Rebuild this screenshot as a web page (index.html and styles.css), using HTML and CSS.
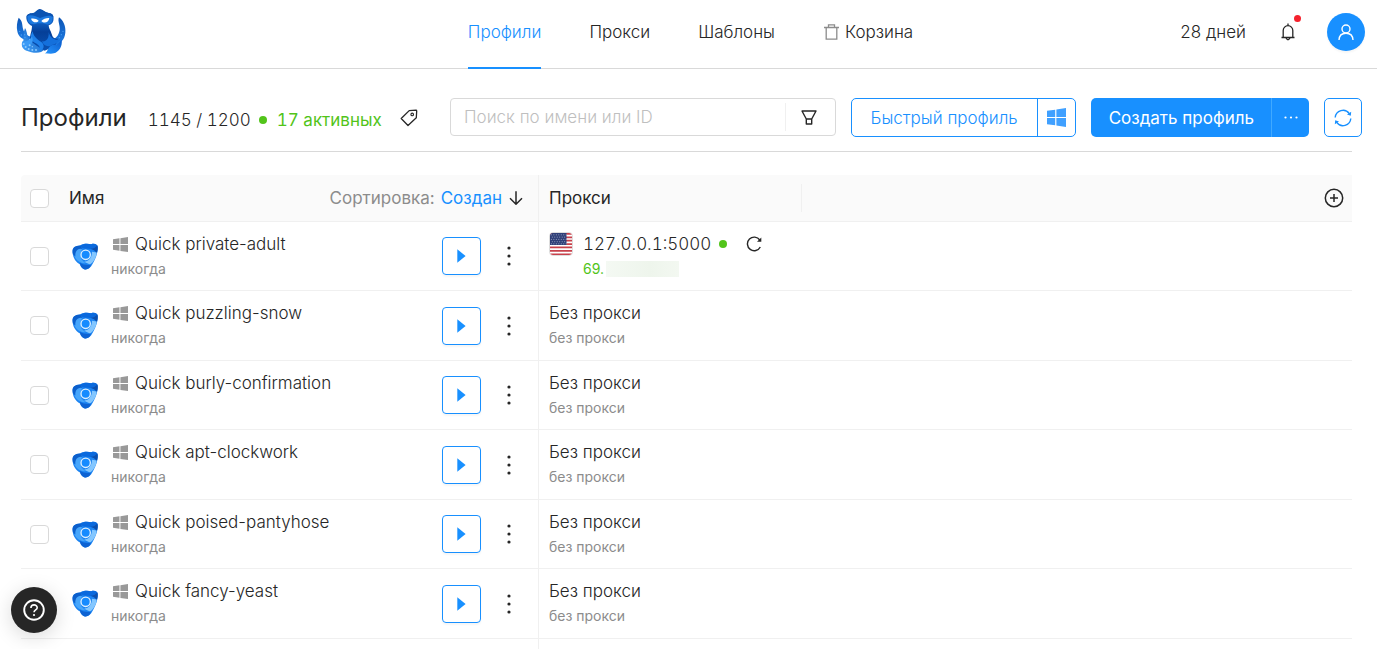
FILE: index.html
```html
<!DOCTYPE html>
<html lang="ru">
<head>
<meta charset="utf-8">
<meta name="viewport" content="width=device-width, initial-scale=1">
<title>Профили</title>
<link rel="stylesheet" href="styles.css">
</head>
<body>
<svg class="sprite" aria-hidden="true">
  <defs>
    <linearGradient id="g-head" x1="0" y1="0" x2="0" y2="1"><stop offset="0" stop-color="#0b4ea8"/><stop offset=".3" stop-color="#1060c4"/><stop offset=".55" stop-color="#053f98"/><stop offset="1" stop-color="#0a52b4"/></linearGradient>
    <linearGradient id="g-arm" x1="0" y1="0" x2="0" y2="1"><stop offset="0" stop-color="#0c54b4"/><stop offset="1" stop-color="#1f7ee6"/></linearGradient>
    <linearGradient id="g-left" x1="1" y1="0" x2="0" y2="1"><stop offset="0" stop-color="#0a55b8"/><stop offset="1" stop-color="#45a4fb"/></linearGradient>
    <linearGradient id="g-paddle" x1="1" y1="0" x2="0" y2="1"><stop offset="0" stop-color="#0a5ccc"/><stop offset="1" stop-color="#2796ff"/></linearGradient>
    <symbol id="win" viewBox="0 0 16 16"><path d="M0 2.400 6.900 1.400V7.500H0zM7.900 1.200 16 0V7.500H7.900zM0 8.500H6.900V14.600L0 13.600zM7.900 8.500H16V16L7.900 14.800z"/></symbol>
    <symbol id="play" viewBox="0 0 9 14"><path d="M0.300 0.300 8.600 7 0.300 13.700z"/></symbol>
    <symbol id="dots" viewBox="0 0 4 20"><circle cx="2" cy="2" r="1.600"/><circle cx="2" cy="10" r="1.600"/><circle cx="2" cy="18" r="1.600"/></symbol>
    <symbol id="browser" viewBox="0 0 78 80">
      <path d="M2 28C0 14 8 8 24 7 32 0 48 1 58 3 68 0 78 4 77 14 78 30 70 48 62 62 56 74 48 80 39 79 30 77 26 70 24 64 10 56 2 42 2 28z" fill="#1c84f2"/>
      <path d="M6 30C8 18 18 14 30 17L26 30 28 48 40 60C22 62 6 46 6 30z" fill="#45a5fb"/>
      <path d="M2 30C0 14 8 8 25 7L31 17C18 16 9 22 10 40 6 37 3 34 2 30z" fill="#0b5fcc"/>
      <path d="M25 8C34 0 48 1 58 3 68 0 78 4 77 14L75 28C66 18 52 15 42 17 34 17 28 14 25 8z" fill="#0a69dd"/>
      <path d="M56 17C66 16 72 12 76 6 78 14 77 22 74 30 70 23 64 19 56 17z" fill="#0c4fad"/>
      <path d="M60 26 74 28C73 42 66 56 54 64L36 56C52 54 60 42 60 26z" fill="#84c7ff"/>
      <path d="M24 58C32 65 44 66 57 65 54 76 45 81 36 78 28 75 24 67 24 58z" fill="#0d62d2"/>
      <circle cx="41" cy="35" r="14" fill="#168bff" stroke="#dff0ff" stroke-width="4"/>
    </symbol>
  </defs>
</svg>

<header class="topbar">
  <a class="logo" href="#" aria-label="Главная">
    <svg viewBox="6 6 150 144" width="50" height="48">
      <path d="M14 35C9 48 7 62 10 76 13 92 24 100 42 104L54 92C40 90 31 82 27 68 24 55 26 44 14 35z" fill="url(#g-arm)"/>
      <path d="M135 34C148 42 156 62 154 80 152 102 138 116 116 118L104 100C124 102 134 90 137 72 139 58 130 46 135 34z" fill="url(#g-arm)"/>
      <path d="M33 66C27 80 30 92 28 104 20 114 24 128 38 134 56 142 82 144 92 130L90 106 66 84 48 104C38 98 42 80 33 66z" fill="url(#g-left)"/>
      <path d="M77 9C88 11 93 19 104 21 116 21 121 32 118 44 116 52 110 56 104 58 104 68 110 74 113 84 116 96 124 100 132 98L124 120 92 134 66 118 48 104C46 90 54 76 54 60 42 54 36 42 37 32 40 21 52 22 60 20 66 17 68 11 77 9z" fill="url(#g-head)"/>
      <path d="M40 30C54 20 68 30 78 34 90 30 104 18 117 30L114 46C112 56 98 58 88 52H70C58 58 46 54 42 44z" fill="#1c78df"/>
      <path d="M37 32C42 20 54 23 62 21 70 17 72 11 77 10 86 12 92 20 104 21 114 22 119 28 118 34 108 24 92 31 78 36 62 29 48 23 37 32z" fill="#0b53b2"/>
      <path d="M51 38C58 36 68 38 74 44 70 51 56 52 51 38zM82 45C88 38 98 35 106 36 104 50 90 54 82 45z" fill="#fff"/>
      <path d="M56 76C46 92 50 104 62 110 76 116 82 126 74 136 90 132 94 118 82 108 68 100 58 90 56 76z" fill="#1e80ea"/>
      <path d="M54 92C44 104 36 108 26 106 20 116 24 128 38 134 28 122 44 124 54 112 58 104 56 98 54 92z" fill="#3a9af6"/>
      <path d="M104 78C106 98 96 108 84 106 90 122 104 124 116 116 128 114 138 104 140 98 134 104 110 104 104 78z" fill="#1470dc"/>
      <path d="M92 142C104 138 100 116 122 116 132 114 138 108 143 102 146 122 134 138 120 142 110 145 102 142 92 142z" fill="url(#g-paddle)"/>
      <g fill="#8ccbff"><circle cx="29" cy="114" r="3"/><circle cx="35" cy="123" r="3"/><circle cx="44" cy="129" r="3"/><circle cx="55" cy="132" r="3"/><circle cx="66" cy="132" r="3"/><circle cx="47" cy="118" r="3"/><circle cx="55" cy="122" r="2"/></g>
      <g fill="#4aa2f6"><circle cx="32" cy="86" r="2"/><circle cx="33" cy="94" r="2"/><circle cx="17" cy="76" r="2"/><circle cx="22" cy="87" r="2"/><circle cx="142" cy="86" r="2"/><circle cx="147" cy="76" r="2"/><circle cx="136" cy="95" r="2"/></g>
    </svg>
  </a>
  <nav class="nav">
    <a class="nav-item active" href="#">Профили</a>
    <a class="nav-item" href="#">Прокси</a>
    <a class="nav-item" href="#">Шаблоны</a>
    <a class="nav-item" href="#"><svg class="trash" viewBox="0 0 15 16" width="15" height="16"><path d="M0 3.500H15M4.500 3.200V.8H10.500V3.200M2.200 3.500V15.200H12.800V3.500" fill="none" stroke="#8c8c8c" stroke-width="1.300"/></svg>Корзина</a>
  </nav>
  <div class="account">
    <span class="days">28 дней</span>
    <button class="bell" aria-label="Уведомления">
      <svg viewBox="0 0 14 18" width="14" height="18"><path d="M.5 14.500H13.500M2.200 14.300V7.500A4.800 4.800 0 0 1 11.800 7.500V14.300M7 2.700V.5M5 15Q7 18.500 9 15" fill="none" stroke="#262626" stroke-width="1.300"/></svg>
      <span class="badge"></span>
    </button>
    <button class="avatar" aria-label="Профиль"><svg viewBox="0 0 16 17" width="16" height="17"><circle cx="8" cy="5" r="4" fill="none" stroke="#fff" stroke-width="1.400"/><path d="M1 16C1.200 11.500 4 9.200 8 9.200S14.800 11.500 15 16" fill="none" stroke="#fff" stroke-width="1.400"/></svg></button>
  </div>
</header>

<main class="page">
  <div class="toolbar">
    <div class="summary">
      <h1 class="title">Профили</h1>
      <span class="count">1145 / 1200</span>
      <span class="dot"></span>
      <span class="active-count">17 активных</span>
      <button class="tag" aria-label="Теги"><svg viewBox="0 0 18 18" width="18" height="18"><path d="M1.200 9.500 9.200 1.600 16 1.200Q16.700 1.200 16.700 2L16.300 8.800 8 16.500z" fill="none" stroke="#262626" stroke-width="1.300" stroke-linejoin="round"/><circle cx="12.200" cy="5.400" r="1.300" fill="none" stroke="#262626" stroke-width="1.100"/></svg></button>
    </div>
    <div class="search">
      <input class="search-input" type="text" placeholder="Поиск по имени или ID" aria-label="Поиск по имени или ID">
      <button class="filter" aria-label="Фильтр"><svg viewBox="0 0 16 15" width="16" height="15"><path d="M1 1H15L10.700 9V14H5.300V9zM5.300 9H10.700" fill="none" stroke="#262626" stroke-width="1.400" stroke-linejoin="round"/></svg></button>
    </div>
    <div class="group outline">
      <button class="group-main">Быстрый профиль</button><button class="group-side" aria-label="Windows"><svg class="win-blue" width="19" height="19"><use href="#win"/></svg></button>
    </div>
    <div class="group solid">
      <button class="group-main">Создать профиль</button><button class="group-side" aria-label="Ещё"><svg viewBox="0 0 14 3" width="14" height="3" fill="#fff"><circle cx="1.500" cy="1.500" r="1.100"/><circle cx="7" cy="1.500" r="1.100"/><circle cx="12.500" cy="1.500" r="1.100"/></svg></button>
    </div>
    <button class="refresh" aria-label="Обновить"><svg viewBox="0 0 18 18" width="18" height="18"><path d="M1.200 8.500A7.800 7.800 0 0 1 15.300 4.600M16.800 9.500A7.800 7.800 0 0 1 2.700 13.400" fill="none" stroke="#1890ff" stroke-width="1.400"/><path d="M17.200 2.800 16.800 6.800 13 5.500zM.8 15.200 1.200 11.200 5 12.500z" fill="#1890ff"/></svg></button>
  </div>
  <hr class="rule">

  <table class="table">
    <colgroup><col class="col-name"><col class="col-proxy"><col></colgroup>
    <thead>
      <tr>
        <th class="name-cell"><div class="head-name"><input class="check" type="checkbox" aria-label="Выбрать все"><span class="head-label">Имя</span><span class="sort-label">Сортировка:</span><button class="sort">Создан<svg viewBox="0 0 14 14" width="14" height="14"><path d="M7 .3V13M1 7.200 7 13.200 13 7.200" fill="none" stroke="#262626" stroke-width="1.500"/></svg></button></div></th>
        <th class="proxy-cell"><div class="head-proxy">Прокси</div></th>
        <th class="add-cell"><button class="add" aria-label="Добавить колонку"><svg viewBox="0 0 20 20" width="20" height="20"><circle cx="10" cy="10" r="8.700"/><path d="M10 6V14M6 10H14"/></svg></button></th>
      </tr>
    </thead>
    <tbody>
      <tr>
        <td class="name-cell"><div class="row"><input class="check" type="checkbox" aria-label="Quick private-adult"><svg class="browser" width="26" height="27"><use href="#browser"/></svg><div class="info"><div class="name"><svg class="win" width="15" height="15"><use href="#win"/></svg>Quick private-adult</div><div class="sub">никогда</div></div><button class="run" aria-label="Запустить"><svg width="9" height="14"><use href="#play"/></svg></button><button class="more" aria-label="Меню"><svg width="4" height="20"><use href="#dots"/></svg></button></div></td>
        <td class="proxy-cell" colspan="2"><div class="proxy">
          <svg class="flag" viewBox="0 0 24 24" width="24" height="24" role="img" aria-label="США"><path fill="#fff" d="M0 0H24V24H0z"/><path d="M0 1H24M0 4.700H24M0 8.400H24M0 12.100H24M0 15.800H24M0 19.500H24M0 23.200H24" stroke="#c8414b" stroke-width="1.900"/><path fill="#2f3f78" d="M0 0H18V13H0z"/><path d="M1 2H18M2 4.500H18M1 7H18M2 9.500H18M1 11.800H18" stroke="#c3c9dc" stroke-width=".8" stroke-dasharray="1 1.700"/></svg>
          <div class="info"><div class="name ip">127.0.0.1:5000<span class="dot"></span><button class="recheck" aria-label="Проверить"><svg viewBox="0 0 16 16" width="16" height="16"><path d="M13.800 4A6.800 6.800 0 1 0 14.300 11" fill="none" stroke="#262626" stroke-width="1.400"/><path d="M15.300 1.500V5.700H11z" fill="#262626"/></svg></button></div><div class="sub green">69.<span class="mask"></span></div></div>
        </div></td>
      </tr>
      <tr>
        <td class="name-cell"><div class="row"><input class="check" type="checkbox" aria-label="Quick puzzling-snow"><svg class="browser" width="26" height="27"><use href="#browser"/></svg><div class="info"><div class="name"><svg class="win" width="15" height="15"><use href="#win"/></svg>Quick puzzling-snow</div><div class="sub">никогда</div></div><button class="run" aria-label="Запустить"><svg width="9" height="14"><use href="#play"/></svg></button><button class="more" aria-label="Меню"><svg width="4" height="20"><use href="#dots"/></svg></button></div></td>
        <td class="proxy-cell" colspan="2"><div class="proxy"><div class="info"><div class="name">Без прокси</div><div class="sub">без прокси</div></div></div></td>
      </tr>
      <tr>
        <td class="name-cell"><div class="row"><input class="check" type="checkbox" aria-label="Quick burly-confirmation"><svg class="browser" width="26" height="27"><use href="#browser"/></svg><div class="info"><div class="name"><svg class="win" width="15" height="15"><use href="#win"/></svg>Quick burly-confirmation</div><div class="sub">никогда</div></div><button class="run" aria-label="Запустить"><svg width="9" height="14"><use href="#play"/></svg></button><button class="more" aria-label="Меню"><svg width="4" height="20"><use href="#dots"/></svg></button></div></td>
        <td class="proxy-cell" colspan="2"><div class="proxy"><div class="info"><div class="name">Без прокси</div><div class="sub">без прокси</div></div></div></td>
      </tr>
      <tr>
        <td class="name-cell"><div class="row"><input class="check" type="checkbox" aria-label="Quick apt-clockwork"><svg class="browser" width="26" height="27"><use href="#browser"/></svg><div class="info"><div class="name"><svg class="win" width="15" height="15"><use href="#win"/></svg>Quick apt-clockwork</div><div class="sub">никогда</div></div><button class="run" aria-label="Запустить"><svg width="9" height="14"><use href="#play"/></svg></button><button class="more" aria-label="Меню"><svg width="4" height="20"><use href="#dots"/></svg></button></div></td>
        <td class="proxy-cell" colspan="2"><div class="proxy"><div class="info"><div class="name">Без прокси</div><div class="sub">без прокси</div></div></div></td>
      </tr>
      <tr>
        <td class="name-cell"><div class="row"><input class="check" type="checkbox" aria-label="Quick poised-pantyhose"><svg class="browser" width="26" height="27"><use href="#browser"/></svg><div class="info"><div class="name"><svg class="win" width="15" height="15"><use href="#win"/></svg>Quick poised-pantyhose</div><div class="sub">никогда</div></div><button class="run" aria-label="Запустить"><svg width="9" height="14"><use href="#play"/></svg></button><button class="more" aria-label="Меню"><svg width="4" height="20"><use href="#dots"/></svg></button></div></td>
        <td class="proxy-cell" colspan="2"><div class="proxy"><div class="info"><div class="name">Без прокси</div><div class="sub">без прокси</div></div></div></td>
      </tr>
      <tr>
        <td class="name-cell"><div class="row"><input class="check" type="checkbox" aria-label="Quick fancy-yeast"><svg class="browser" width="26" height="27"><use href="#browser"/></svg><div class="info"><div class="name"><svg class="win" width="15" height="15"><use href="#win"/></svg>Quick fancy-yeast</div><div class="sub">никогда</div></div><button class="run" aria-label="Запустить"><svg width="9" height="14"><use href="#play"/></svg></button><button class="more" aria-label="Меню"><svg width="4" height="20"><use href="#dots"/></svg></button></div></td>
        <td class="proxy-cell" colspan="2"><div class="proxy"><div class="info"><div class="name">Без прокси</div><div class="sub">без прокси</div></div></div></td>
      </tr>
    </tbody>
    <tfoot>
      <tr><td class="name-cell"></td><td class="proxy-cell" colspan="2"></td></tr>
    </tfoot>
  </table>
</main>

<button class="help" aria-label="Помощь"><svg viewBox="0 0 22 22" width="22" height="22"><circle cx="11" cy="11" r="9.800" fill="none" stroke="#fff" stroke-width="1.900"/><path d="M7.900 8.900C8 4.900 14.200 5 14.200 8.700 14.200 11 11 10.900 11 13.300" fill="none" stroke="#fff" stroke-width="1.600"/><circle cx="11" cy="16" r="1.100" fill="#fff"/></svg></button>
</body>
</html>
```

FILE: styles.css
```css
* { box-sizing: border-box; }
body {
  margin: 0;
  font-family: Inter, "Liberation Sans", sans-serif;
  font-size: 17px;
  font-weight: 300;
  line-height: 24px;
  color: #262626;
  background: #fff;
}
button {
  padding: 0;
  border: 0;
  background: none;
  font: inherit;
  color: inherit;
  cursor: pointer;
  display: flex;
  align-items: center;
  justify-content: center;
}
a { color: inherit; text-decoration: none; }
svg { flex: none; display: block; }
.sprite { position: absolute; width: 0; height: 0; }

.topbar {
  display: grid;
  grid-template-columns: 1fr auto 1fr;
  height: 69px;
  border-bottom: 1px solid #d9d9d9;
}
.logo { padding: 8px 0 0 16px; }
.nav { display: flex; gap: 48px; padding-left: 4px; }
.nav-item {
  display: flex;
  align-items: center;
  padding-bottom: 4px;
  height: 69px;
  border-bottom: 2px solid transparent;
}
.nav-item.active { color: #1890ff; border-color: #1890ff; }
.trash { margin: 0 6px 0 1px; }
.account {
  display: flex;
  justify-content: flex-end;
  align-items: center;
  padding: 0 12px 5px 0;
}
.bell { position: relative; margin: 0 32px 0 35px; }
.badge {
  position: absolute;
  top: -8px;
  right: -6px;
  width: 7px;
  height: 7px;
  border-radius: 50%;
  background: #f5222d;
}
.avatar {
  width: 38px;
  height: 38px;
  border-radius: 50%;
  background: #1890ff;
  box-shadow: 0 2px 2px rgba(0, 0, 0, .04);
}

.page { padding: 0 25px 0 21px; }
.toolbar {
  display: flex;
  gap: 15px;
  margin-right: -10px;
  padding: 29px 0 14px;
}
.rule { margin: 0 0 23px; border: 0; height: 1px; background: #d9d9d9; }
.summary {
  display: flex;
  align-items: center;
  width: 414px;
  white-space: nowrap;
}
.title { margin: 0 21px 0 0; font-size: 24px; font-weight: 400; line-height: 38px; }
.count, .active-count { margin-top: 4px; font-variant-numeric: tabular-nums; }
.dot {
  width: 8px;
  height: 8px;
  border-radius: 50%;
  background: #52c41a;
}
.summary .dot { margin: 4px 10px 0 8px; }
.active-count { color: #52c41a; font-weight: 400; }
.tag { margin-left: 18px; }
.search {
  flex: 1;
  display: flex;
  align-items: center;
  height: 38px;
  border: 1px solid #d9d9d9;
  border-radius: 4px;
}
.search-input {
  flex: 1;
  min-width: 0;
  padding: 0 13px;
  border: 0;
  outline: 0;
  background: none;
  font: inherit;
}
.search-input::placeholder { color: #bfbfbf; opacity: 1; }
.filter { width: 50px; height: 28px; padding-right: 2px; border-left: 1px solid #f0f0f0; }
.group { display: flex; height: 39px; border-radius: 5px; }
.group-main { padding: 0 19px; white-space: nowrap; }
.group-side { width: 38px; }
.outline { border: 1px solid #1890ff; color: #1890ff; }
.outline .group-side { border-left: 1px solid #1890ff; }
.win-blue { fill: #40a0ff; }
.solid { background: #1890ff; color: #fff; font-weight: 400; }
.solid .group-main { padding: 0 17px 0 18px; }
.solid .group-side { border-left: 1px solid #40a9ff; }
.refresh { width: 38px; height: 39px; border: 1px solid #1890ff; border-radius: 5px; }

.table {
  width: 100%;
  table-layout: fixed;
  border-collapse: separate;
  border-spacing: 0;
}
.col-name { width: 518px; }
.col-proxy { width: 263px; }
th, td { padding: 0; text-align: left; font-weight: inherit; }
th { height: 47px; background: #fafafa; border-bottom: 1px solid #f0f0f0; font-weight: 400; }
th:first-child { border-top-left-radius: 4px; }
td { height: 69px; border-bottom: 1px solid #f0f0f0; }
tbody tr:nth-child(even) td { height: 70px; }
tfoot td { height: 10px; border-bottom: 0; }
.name-cell { border-right: 1px solid #f0f0f0; }
.head-name, .row { display: flex; align-items: center; padding-left: 9px; }
.head-name { padding-right: 15px; }
.check {
  appearance: none;
  flex: none;
  width: 19px;
  height: 19px;
  margin: 0;
  border: 1px solid #d9d9d9;
  border-radius: 4px;
  background: #fff;
}
.head-label { margin-left: 20px; flex: 1; }
.sort-label { color: #8c8c8c; margin-right: 6px; }
.sort { color: #1890ff; gap: 7px; }
.head-proxy { padding-left: 10px; border-right: 1px solid #f0f0f0; line-height: 28px; }
.add { margin: 0 8px 0 auto; }
.add svg { fill: none; stroke: #262626; stroke-width: 1.5px; }
.browser { margin: 0 13px 0 23px; }
.info { flex: 1; }
.name { display: flex; align-items: center; line-height: 25px; }
.sub { display: flex; align-items: center; font-size: 14px; font-weight: 400; line-height: 24px; color: #8c8c8c; }
.win { margin: 0 7px 0 2px; fill: #999; }
.run {
  width: 39px;
  height: 38px;
  border: 1px solid #1890ff;
  border-radius: 4px;
  fill: #1890ff;
  box-shadow: 0 2px 2px rgba(0, 0, 0, .04);
}
.more { width: 20px; height: 38px; margin: 0 19px 0 18px; fill: #262626; }
.proxy { display: flex; padding-left: 10px; }
.flag { margin-right: 10px; border-radius: 4px; border: 1px solid #ddd; }
.ip { font-variant-numeric: tabular-nums; }
.ip .dot { margin: 0 19px 0 8px; }
.green { color: #52c41a; }
.mask { width: 73px; height: 16px; margin-left: 2px; background: linear-gradient(90deg, #f4f9f3, #eef5ec 60%, #f3f8f1); }

.help {
  position: fixed;
  left: 11px;
  bottom: 16px;
  width: 46px;
  height: 46px;
  border-radius: 50%;
  background: #262626;
  box-shadow: 0 4px 20px rgba(0, 0, 0, .15);
}
```
